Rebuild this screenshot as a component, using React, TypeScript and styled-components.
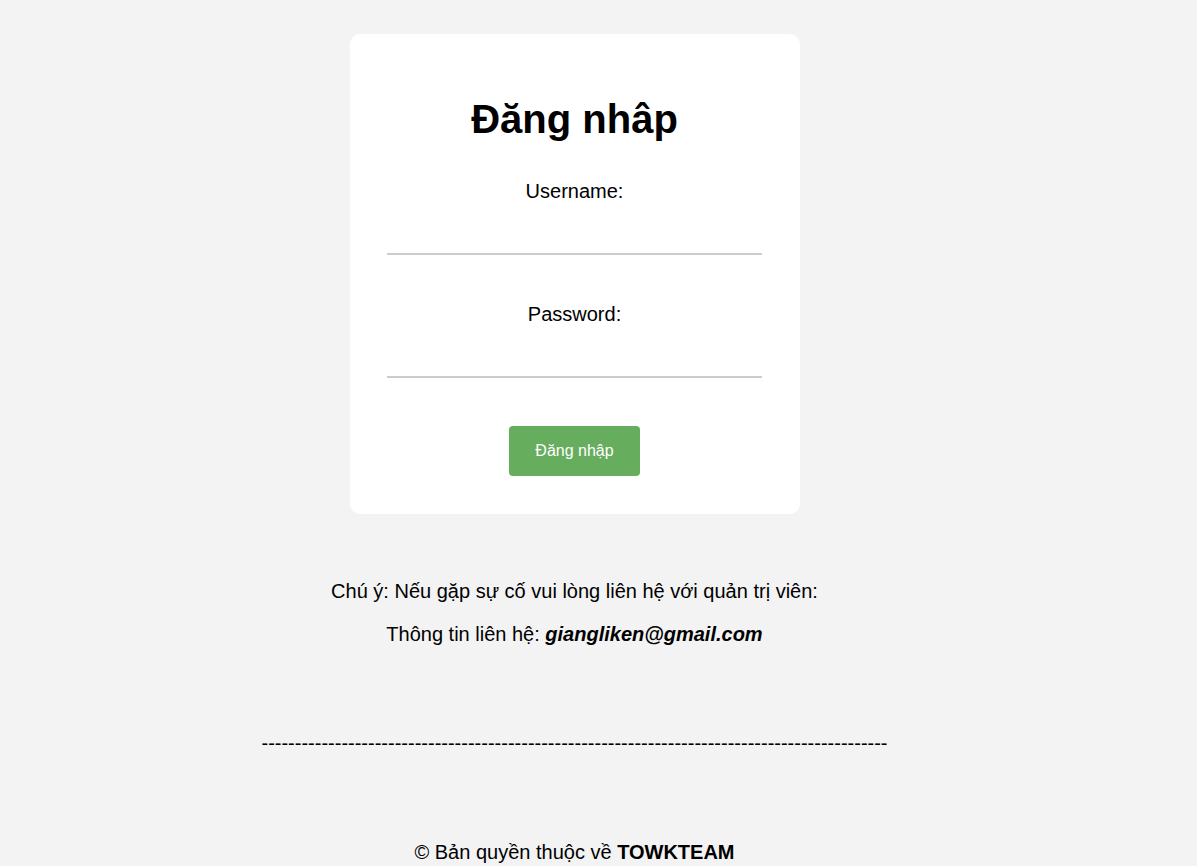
import React from "react";
import styled, { createGlobalStyle } from "styled-components";

const Global = createGlobalStyle`
  html, body { margin: 0; padding: 0; background: #f3f3f3; }
  body { font-family: "Liberation Sans", Arial, sans-serif; color: #000; }
`;

const Page = styled.div`
  width: 1149px;
  text-align: center;
  padding-top: 34px;
`;

const Card = styled.form`
  width: 450px;
  box-sizing: border-box;
  margin: 0 auto;
  background: #fff;
  border-radius: 10px;
  padding: 62px 37.5px 38px;
  display: flex;
  flex-direction: column;
  align-items: center;
`;

const Title = styled.h1`
  font-size: 40px;
  font-weight: bold;
  margin: 0 0 38px;
  line-height: 46px;
`;

const Label = styled.label`
  font-size: 20px;
  line-height: 23px;
  display: block;
`;

const Input = styled.input`
  width: 100%;
  height: 40px;
  box-sizing: border-box;
  margin: 12px 0 48px;
  border: none;
  border-bottom: 2px solid #cccccc;
  outline: none;
  background: transparent;
  font-size: 16px;
`;

const Button = styled.button`
  background: #66ad5e;
  color: #fff;
  border: none;
  border-radius: 4px;
  width: 131px;
  height: 50px;
  font-family: "Liberation Sans", Arial, sans-serif;
  font-size: 16px;
  cursor: pointer;
`;

const Note = styled.p<{ $top: number }>`
  font-size: 20px;
  line-height: 23px;
  margin: ${(p) => p.$top}px 0 0;
`;

const Email = styled.b`
  font-style: italic;
`;

export default function App() {
  return (
    <>
      <Global />
      <Page>
        <Card onSubmit={(e) => e.preventDefault()}>
          <Title>Đăng nhâp</Title>
          <Label>Username:</Label>
          <Input type="text" />
          <Label>Password:</Label>
          <Input type="password" />
          <Button type="submit">Đăng nhập</Button>
        </Card>
        <Note $top={66}>Chú ý: Nếu gặp sự cố vui lòng liên hệ với quản trị viên:</Note>
        <Note $top={20}>
          Thông tin liên hệ: <Email>giangliken@gmail.com</Email>
        </Note>
        <Note $top={86}>{"-".repeat(94)}</Note>
        <Note $top={86}>
          © Bản quyền thuộc về <b>TOWKTEAM</b>
        </Note>
      </Page>
    </>
  );
}
